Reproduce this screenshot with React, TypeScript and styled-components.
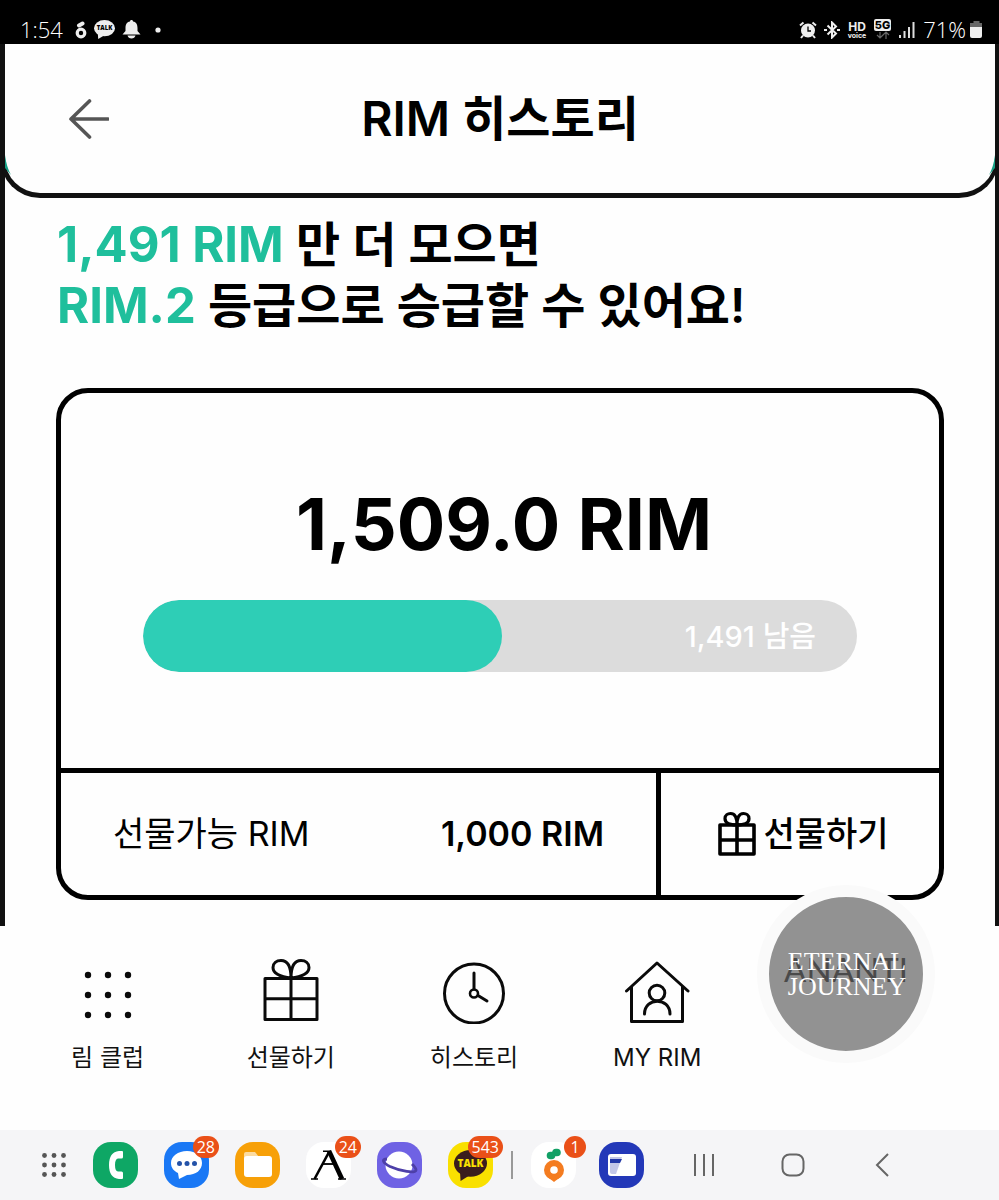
import React from "react";
import styled, { createGlobalStyle } from "styled-components";

const GlobalStyle = createGlobalStyle`
  *, *::before, *::after { box-sizing: border-box; }
  body {
    margin: 0;
    background: #fefefe;
    color: #000;
    font-family: Inter, "Noto Sans CJK KR", sans-serif;
  }
  button { font: inherit; color: inherit; background: none; border: 0; padding: 0; cursor: pointer; }
  a { color: inherit; text-decoration: none; }
  h1, p { margin: 0; }
  svg { display: block; flex: none; }
`;

const Screen = styled.div`
  display: flex;
  flex-direction: column;
  min-height: 100vh;
`;

/* ---------- system status bar ---------- */
const StatusBar = styled.div`
  display: flex;
  justify-content: space-between;
  height: 44px;
  padding: 15px 16px 0 20px;
  background: #000;
  color: #fff;
  font-family: "Open Sans", "Noto Sans", sans-serif;
  font-size: 22px;
  font-weight: 300;
  line-height: 29px;
`;

const StatusGroup = styled.div<{ $gap: number }>`
  display: flex;
  align-items: center;
  gap: ${(p) => p.$gap}px;
`;

const Clock = styled.span`
  margin-right: 5px;
`;

/* ---------- app page ---------- */
const Frame = styled.div`
  border: solid #111;
  border-width: 0 4px 0 5px;
  padding-bottom: 26px;
`;

const Header = styled.header`
  position: relative;
  display: grid;
  grid-template-columns: 100px 1fr 100px;
  align-items: center;
  height: 154px;
  margin: 0 -4px 0 -5px;
  padding: 0 32px;
  border: solid #111;
  border-width: 0 4px 5px 5px;
  border-radius: 0 0 40px 40px;
`;

const BackButton = styled.button`
  justify-self: start;
  padding: 10px 30px;
`;

const Title = styled.h1`
  text-align: center;
  font-size: 48px;
  line-height: 60px;
  font-weight: 600;
`;

const Corner = styled.svg<{ $side: "left" | "right" }>`
  position: absolute;
  bottom: 0;
  ${(p) => p.$side}: 0;
  transform: ${(p) => (p.$side === "right" ? "scaleX(-1)" : "none")};
`;

const Content = styled.main`
  padding: 16px 51px 0;
`;

const Lead = styled.p`
  padding-left: 1px;
  font-size: 48px;
  line-height: 61px;
  font-weight: 600;
`;

const Accent = styled.strong`
  color: #1fbf9c;
  font-size: 49px;
  font-weight: 700;
`;

const Card = styled.section`
  margin-top: 52px;
  border: 5px solid #000;
  border-radius: 32px;
`;

const Balance = styled.div`
  height: 375px;
  padding: 88px 82px 0;
`;

const Amount = styled.p`
  padding-left: 8px;
  text-align: center;
  font-size: 72px;
  line-height: 86px;
  font-weight: 700;
`;

const Track = styled.div`
  display: flex;
  height: 72px;
  margin-top: 33px;
  border-radius: 36px;
  background: #dcdcdc;
  overflow: hidden;
`;

const Fill = styled.div`
  border-radius: 36px;
  background: #2eceb6;
`;

const Remaining = styled.span`
  margin-left: auto;
  padding-right: 41px;
  color: #fff;
  font-size: 29px;
  font-weight: 500;
  line-height: 74px;
`;

const CardFooter = styled.div`
  display: flex;
  height: 127px;
  border-top: 5px solid #000;
  font-size: 34px;
  line-height: 44px;
`;

const Giftable = styled.div`
  flex: 1;
  display: flex;
  align-items: center;
  justify-content: space-between;
  padding: 0 52px;
  border-right: 5px solid #000;
`;

const GiftValue = styled.span`
  font-weight: 600;
`;

const GiftButton = styled.button`
  display: flex;
  align-items: center;
  justify-content: center;
  gap: 6px;
  width: 278px;
  padding-left: 6px;
  font-weight: 500;
`;

/* ---------- tab bar ---------- */
const TabBar = styled.nav`
  position: relative;
  display: grid;
  grid-template-columns: repeat(5, 1fr);
  height: 204px;
  padding: 30px 67px 0 16px;
`;

const Tab = styled.a`
  display: flex;
  flex-direction: column;
  align-items: center;
  gap: 17px;
  color: #111;
  font-size: 24px;
  line-height: 34px;
`;

const Floating = styled.button`
  position: absolute;
  top: -41px;
  right: 64px;
  width: 178px;
  height: 178px;
  border: 12px solid #fafafa;
  border-radius: 50%;
  background: #929292;
`;

/* ---------- system dock ---------- */
const Dock = styled.div`
  display: flex;
  align-items: center;
  height: 70px;
  margin-top: auto;
  padding: 0 73px 0 41px;
  background: #f5f5f7;
`;

const Apps = styled.div<{ $gap: number }>`
  display: flex;
  align-items: center;
  gap: ${(p) => p.$gap}px;
`;

const AppIcon = styled.button<{ $bg: string }>`
  position: relative;
  display: grid;
  place-items: center;
  width: 45px;
  height: 46px;
  border-radius: 18px;
  background: ${(p) => p.$bg};
`;

const Badge = styled.span`
  position: absolute;
  top: -6px;
  right: -10px;
  min-width: 22px;
  height: 22px;
  padding: 0 4px;
  border-radius: 11px;
  background: #ea5018;
  color: #fff;
  font-family: "Open Sans", "Noto Sans", sans-serif;
  font-size: 16px;
  line-height: 22px;
  text-align: center;
`;

const Divider = styled.span`
  width: 2px;
  height: 28px;
  margin: 0 18px;
  background: #999;
`;

const SystemKeys = styled.div`
  flex: 1;
  display: grid;
  grid-template-columns: repeat(3, 1fr);
  margin-left: 16px;
`;

const Key = styled.button`
  display: grid;
  place-items: center;
  height: 70px;
`;

/* ---------- drawings ---------- */
const Dots = ({ size, step, r, color, dy = 0 }: { size: number; step: number; r: number; color: string; dy?: number }) => (
  <svg width={size} height={size} fill={color} aria-hidden="true">
    {[-1, 0, 1].map((y) =>
      [-1, 0, 1].map((x) => (
        <circle key={`${x}${y}`} cx={size / 2 + x * step} cy={size / 2 + dy + y * step} r={r} />
      ))
    )}
  </svg>
);

const CardGift = () => (
  <svg width="40" height="46" viewBox="0 0 40 46" fill="none" stroke="#000" strokeWidth="3.6" strokeLinejoin="round" aria-hidden="true">
    <path d="M3 14h34v29H3zM3 29h34M20 14v29" />
    <path d="M20 14C13 14 8 12 8 7.500C8 4 11 2.500 13.500 2.500C18 2.500 20 7 20 14C20 7 22 2.500 26.500 2.500C29 2.500 32 4 32 7.500C32 12 27 14 20 14" strokeWidth="3.2" />
  </svg>
);

const TabGift = () => (
  <svg width="68" height="68" viewBox="0 0 68 68" fill="none" stroke="#0a0a0a" strokeWidth="3" strokeLinejoin="round" aria-hidden="true">
    <path d="M8 22.500h52v41H8zM8 42.800h52M34 22.500v41" />
    <path d="M34 22C22 20.500 16 17 16 11.500C16 7 19.500 4.500 24 4.500C31 4.500 34 12 34 22C34 12 37 4.500 44 4.500C48.500 4.500 52 7 52 11.500C52 17 46 20.500 34 22" />
  </svg>
);

const TabClock = () => (
  <svg width="68" height="68" viewBox="0 0 68 68" fill="none" stroke="#0a0a0a" strokeWidth="3" strokeLinecap="round" aria-hidden="true">
    <circle cx="34" cy="37.500" r="29.500" />
    <circle cx="34" cy="37.500" r="4" strokeWidth="2.600" />
    <path d="M34 33V17M38 39.500l9 5.500" />
  </svg>
);

const TabHome = () => (
  <svg width="68" height="68" viewBox="0 0 68 68" fill="none" stroke="#0a0a0a" strokeWidth="3" strokeLinecap="round" strokeLinejoin="round" aria-hidden="true">
    <path d="M3.500 35L34 7l31 28M8.500 31v34.500h51V31" />
    <circle cx="34" cy="37" r="7.800" />
    <path d="M21.500 58c0-17 25.500-17 25.500 0" />
  </svg>
);

const TalkBubble = ({ w, h, bg, fg, size }: { w: number; h: number; bg: string; fg: string; size: number }) => (
  <svg width={w} height={h} viewBox={`0 0 ${w} ${h}`} aria-hidden="true">
    <ellipse cx={w / 2} cy={h * 0.43} rx={w / 2} ry={h * 0.43} fill={bg} />
    <path d={`M${w * 0.18} ${h * 0.66}L${w * 0.2} ${h}L${w * 0.5} ${h * 0.8}z`} fill={bg} />
    <text x={w / 2} y={h * 0.43 + size * 0.36} textAnchor="middle" fontFamily="Open Sans, sans-serif" fontWeight="800" fontSize={size} fill={fg}>TALK</text>
  </svg>
);

export default function App() {
  return (
    <>
      <GlobalStyle />
      <Screen>
        <StatusBar>
          <StatusGroup $gap={7}>
            <Clock>1:54</Clock>
            <svg width="12" height="18" viewBox="0 0 12 18" aria-hidden="true">
              <circle cx="6" cy="12" r="3.800" fill="none" stroke="#eee" strokeWidth="3.200" />
              <path d="M4 4.500L7.500 2.500" stroke="#eee" strokeWidth="4" strokeLinecap="round" />
            </svg>
            <TalkBubble w={21} h={19} bg="#eee" fg="#000" size={6} />
            <svg width="19" height="19" viewBox="0 0 18 19" fill="#eee" aria-hidden="true">
              <path d="M9 0c1 0 1.500.7 1.500 1.500C14 2 15 5 15 8v3l3 3.500H0L3 11V8c0-3 1-6 4.500-6.500C7.500.7 8 0 9 0zM5 15.500h8c-.5 2-2 3-4 3s-3.500-1-4-3z" />
            </svg>
            <svg width="20" height="6" aria-hidden="true"><circle cx="10" cy="3" r="2.600" fill="#eee" /></svg>
          </StatusGroup>
          <StatusGroup $gap={7}>
            <svg width="18" height="18" viewBox="0 0 18 18" aria-hidden="true">
              <circle cx="9" cy="9.500" r="7" fill="#eee" />
              <path d="M1 4.500L4.500 1.500M17 4.500L13.500 1.500M4 14.500L2 17M14 14.500l2 2.500" stroke="#eee" strokeWidth="2" />
              <path d="M9 5.500v4.500h3" fill="none" stroke="#000" strokeWidth="1.300" />
            </svg>
            <svg width="16" height="18" viewBox="0 0 16 18" fill="none" stroke="#eee" strokeWidth="2" aria-hidden="true">
              <path d="M3.500 4.500L12 12.500L8 16.500V1.500L12 5.500L3.500 13.500M0 9h3M13 9h3" />
            </svg>
            <svg width="20" height="22" viewBox="0 0 20 22" fill="#eee" fontFamily="Inter, sans-serif" fontWeight="700" aria-hidden="true">
              <text x="10" y="12" textAnchor="middle" fontSize="12">HD</text>
              <text x="10" y="19" textAnchor="middle" fontSize="7">voice</text>
            </svg>
            <svg width="18" height="22" viewBox="0 0 18 22" aria-hidden="true">
              <rect y="0" width="17" height="12" rx="2" fill="#eee" />
              <text x="8.500" y="10" textAnchor="middle" fontFamily="Inter, sans-serif" fontWeight="800" fontSize="11" fill="#000">5G</text>
              <path d="M6 13v6m-3-3l3 3l3-3M12 20v-7m-3 3l3-3l3 3" fill="none" stroke="#666" strokeWidth="1.200" />
            </svg>
            <svg width="17" height="18" fill="#ddd" aria-hidden="true">
              <path d="M0 14h2v3H0zM4.500 10h2v7h-2zM9 6h2v11H9zM13.500 1h2v16h-2z" />
            </svg>
            <StatusGroup $gap={4}>
              <span>71%</span>
              <svg width="13" height="17" aria-hidden="true">
                <path d="M3.500 0h6v2H12v4H0V2h3.500z" fill="#666" />
                <path d="M0 6h12v9q0 2-2 2H2q-2 0-2-2z" fill="#eee" />
              </svg>
            </StatusGroup>
          </StatusGroup>
        </StatusBar>

        <Frame>
          <Header>
            <BackButton aria-label="뒤로">
              <svg width="42" height="42" viewBox="0 0 42 42" fill="none" stroke="#555" strokeWidth="3.600" strokeLinecap="round" strokeLinejoin="round" aria-hidden="true">
                <path d="M22.500 3L4 21l18.500 18M4 21h37" />
              </svg>
            </BackButton>
            <Title>RIM 히스토리</Title>
            {(["left", "right"] as const).map((side) => (
              <Corner key={side} $side={side} width="8" height="38" viewBox="0 0 8 38" aria-hidden="true">
                <path d="M0 0Q1.500 12 6 20L0 13z" fill="#16a085" />
              </Corner>
            ))}
          </Header>
          <Content>
            <Lead>
              <Accent>1,491 RIM</Accent> 만 더 모으면
              <br />
              <Accent>RIM.2</Accent> 등급으로 승급할 수 있어요!
            </Lead>
            <Card>
              <Balance>
                <Amount>1,509.0 RIM</Amount>
                <Track role="progressbar" aria-label="RIM" aria-valuemin={0} aria-valuemax={3000} aria-valuenow={1509}>
                  <Fill style={{ width: `${(1509 / 3000) * 100}%` }} />
                  <Remaining>1,491 남음</Remaining>
                </Track>
              </Balance>
              <CardFooter>
                <Giftable>
                  <span>선물가능 RIM</span>
                  <GiftValue>1,000 RIM</GiftValue>
                </Giftable>
                <GiftButton>
                  <CardGift />
                  선물하기
                </GiftButton>
              </CardFooter>
            </Card>
          </Content>
        </Frame>

        <TabBar>
          <Tab href="#club"><Dots size={68} step={20} r={3.2} color="#0a0a0a" dy={5} />림 클럽</Tab>
          <Tab href="#gift"><TabGift />선물하기</Tab>
          <Tab href="#history"><TabClock />히스토리</Tab>
          <Tab href="#my"><TabHome />MY RIM</Tab>
          <Floating>
            <svg width="154" height="154" viewBox="0 0 154 154" textAnchor="middle">
              <text x="77" y="85" fontFamily="Lato, sans-serif" fontWeight="400" fontSize="33" fill="#4a4a4a">ANANTI</text>
              <g fontFamily="Liberation Serif, serif" fontSize="26" fill="#fff">
                <text x="78" y="73">ETERNAL</text>
                <text x="78" y="98">JOURNEY</text>
              </g>
            </svg>
          </Floating>
        </TabBar>

        <Dock>
          <Apps $gap={26}>
            <button aria-label="앱 목록"><Dots size={26} step={9.5} r={2.4} color="#555" /></button>
            <AppIcon $bg="#0ea765" aria-label="전화">
              <svg width="14" height="28" viewBox="0 0 14 28" fill="#fff">
                <path d="M10 0h3q1 0 1 1v5q0 1.500-1.500 1.500H9Q6 8 6 14T9 20.500h3.500Q14 20.500 14 22v5q0 1-1 1h-3Q0 27 0 14T10 0z" />
              </svg>
            </AppIcon>
            <AppIcon $bg="#1a78f5" aria-label="메시지">
              <svg width="32" height="28" viewBox="0 0 32 28">
                <path d="M16 0C25 0 31 5 31 12S25 24 16 24L8 28L7 22C3 20 0 17 0 12C0 5 7 0 16 0z" fill="#fff" />
                <g fill="#2452a8"><circle cx="8.500" cy="12.500" r="2.500" /><circle cx="16" cy="12.500" r="2.500" /><circle cx="23.500" cy="12.500" r="2.500" /></g>
              </svg>
              <Badge>28</Badge>
            </AppIcon>
            <AppIcon $bg="#f7a008" aria-label="내 파일">
              <svg width="28" height="26" viewBox="0 0 28 26">
                <path d="M0 8V2q0-2 2-2h9l4 5v3z" fill="#fcdba0" />
                <rect y="4" width="28" height="21" rx="3" fill="#fff" />
              </svg>
            </AppIcon>
            <AppIcon $bg="#fff" aria-label="아난티">
              <svg width="35" height="30" viewBox="0 0 35 30" fill="none" stroke="#000">
                <path d="M12 1.200h8M0 29h7M27 29h8" strokeWidth="1.600" />
                <path d="M12 14h11" strokeWidth="1.800" />
                <path d="M17.500 3L3.500 29" strokeWidth="2.600" />
                <path d="M18 1l13 28" strokeWidth="4.600" />
              </svg>
              <Badge>24</Badge>
            </AppIcon>
            <AppIcon $bg="#6f62e4" aria-label="인터넷">
              <svg width="36" height="30" viewBox="0 0 36 30">
                <circle cx="17" cy="15" r="13.500" fill="#fff" />
                <path d="M5 9C-1 9 1 13 8 16.500C18 21 34 24 34 20C34 18 32 16 30 14" fill="none" stroke="#4d3fa8" strokeWidth="2.800" />
              </svg>
            </AppIcon>
            <AppIcon $bg="#f9e000" aria-label="카카오톡">
              <TalkBubble w={33} h={31} bg="#3a1d1d" fg="#f9e000" size={10} />
              <Badge>543</Badge>
            </AppIcon>
          </Apps>
          <Divider />
          <Apps $gap={23}>
            <AppIcon $bg="#fff" aria-label="당근">
              <svg width="20" height="34" viewBox="0 0 20 34">
                <circle cx="10" cy="22" r="10" fill="#f47c20" />
                <path d="M3 28.500h14L10 34z" fill="#f47c20" />
                <circle cx="10" cy="22" r="3.800" fill="#fff" />
                <path d="M6.500 7.500h1M12 4.500h1" stroke="#12a066" strokeWidth="7.600" strokeLinecap="round" />
              </svg>
              <Badge>1</Badge>
            </AppIcon>
            <AppIcon $bg="#2338b8" aria-label="지갑">
              <svg width="28" height="22" viewBox="0 0 28 22">
                <rect width="28" height="22" rx="3" fill="#fff" />
                <path d="M2 3h12L8 20H4q-2 0-2-2z" fill="#c3c7e8" />
                <path d="M2 5h12l-2 4H2z" fill="#2338a8" />
              </svg>
            </AppIcon>
          </Apps>
          <SystemKeys>
            <Key aria-label="최근 앱">
              <svg width="22" height="22" stroke="#666" strokeWidth="2"><path d="M2 0v22M11 0v22M20 0v22" /></svg>
            </Key>
            <Key aria-label="홈">
              <svg width="24" height="24" fill="none" stroke="#666" strokeWidth="2"><rect x="1.500" y="1.500" width="21" height="21" rx="7" /></svg>
            </Key>
            <Key aria-label="이전">
              <svg width="14" height="24" fill="none" stroke="#666" strokeWidth="2"><path d="M13 1L2 12l11 11" /></svg>
            </Key>
          </SystemKeys>
        </Dock>
      </Screen>
    </>
  );
}
